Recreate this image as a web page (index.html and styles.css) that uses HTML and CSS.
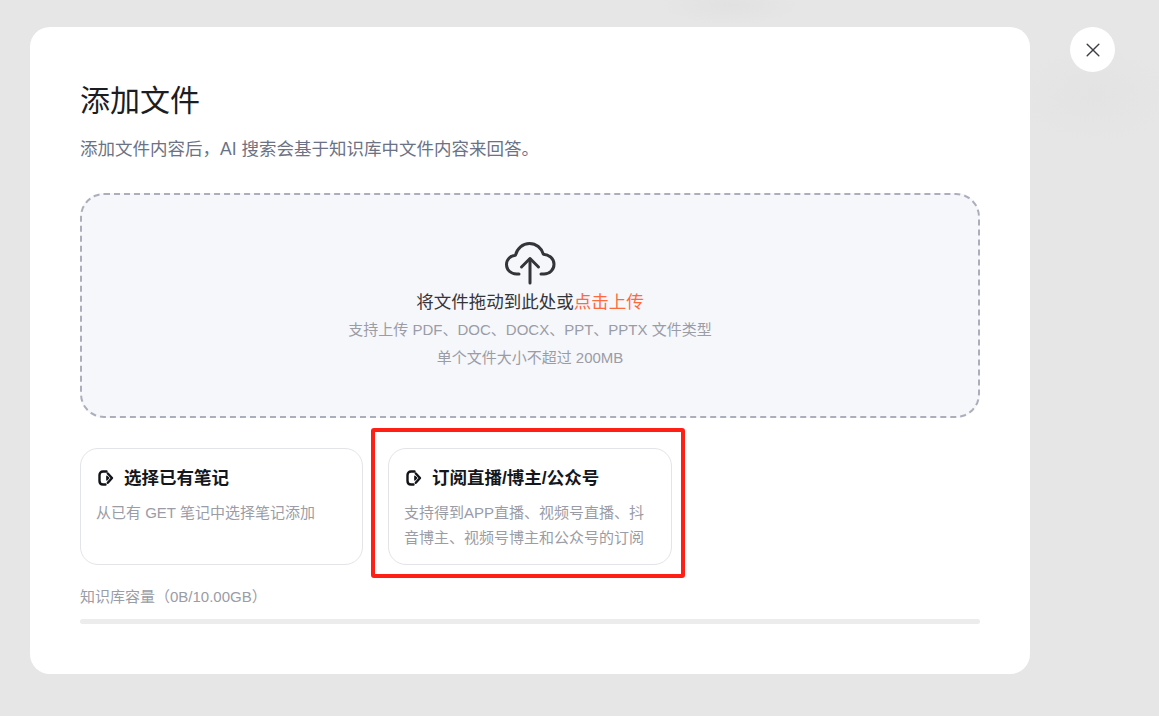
FILE: index.html
```html
<!DOCTYPE html>
<html lang="zh-CN">
<head>
  <meta charset="UTF-8" />
  <title>添加文件</title>
  <link rel="stylesheet" href="styles.css">
</head>
<body>

  <div class="overlay">
    <div class="modal">
      <h1 class="modal-title">添加文件</h1>
      <p class="modal-desc">添加文件内容后，AI 搜索会基于知识库中文件内容来回答。</p>

      <div class="upload-box">
        <svg class="upload-icon" width="52" height="44" viewBox="0 0 52 44" fill="none" stroke="#33353a" stroke-width="3" stroke-linecap="round" stroke-linejoin="round">
          <path d="M15 33H12.5C6.8 33 2.5 28.9 2.5 23.5C2.5 18.3 6.6 14.5 11.5 14.2C13 7.6 18.6 2.5 25.5 2.5C32.2 2.5 37.6 7 39.3 13.2C45 13.4 50 17.6 50 23.3C50 28.9 45.5 33 40 33H37" />
          <path d="M26 42V18" />
          <path d="M17.5 26L26 17.5L34.5 26" />
        </svg>
        <div class="upload-main">将文件拖动到此处或<span class="upload-link">点击上传</span></div>
        <div class="upload-hint upload-hint-first">支持上传 PDF、DOC、DOCX、PPT、PPTX 文件类型</div>
        <div class="upload-hint">单个文件大小不超过 200MB</div>
      </div>

      <div class="sources">
        <div class="source-card">
          <div class="source-title">
            <svg class="source-icon" width="16" height="16" viewBox="0 0 16 16" fill="none" stroke="#111318" stroke-width="2.4" stroke-linecap="round" stroke-linejoin="round">
              <path d="M8.5 1.5H5C2.8 1.5 1.5 3 1.5 5V11C1.5 13 2.8 14.5 5 14.5H7.5" />
              <path d="M9.8 3.5L14 8L9.8 12.8" />
              <path d="M8.8 6.2L10.8 8L8.8 10Z" fill="#111318" stroke-width="1.2" />
            </svg>
            选择已有笔记
          </div>
          <p class="source-desc">从已有 GET 笔记中选择笔记添加</p>
        </div>

        <div class="source-card">
          <div class="source-title">
            <svg class="source-icon" width="16" height="16" viewBox="0 0 16 16" fill="none" stroke="#111318" stroke-width="2.4" stroke-linecap="round" stroke-linejoin="round">
              <path d="M8.5 1.5H5C2.8 1.5 1.5 3 1.5 5V11C1.5 13 2.8 14.5 5 14.5H7.5" />
              <path d="M9.8 3.5L14 8L9.8 12.8" />
              <path d="M8.8 6.2L10.8 8L8.8 10Z" fill="#111318" stroke-width="1.2" />
            </svg>
            订阅直播/博主/公众号
          </div>
          <p class="source-desc">支持得到APP直播、视频号直播、抖音博主、视频号博主和公众号的订阅</p>
          <div class="highlight"></div>
        </div>
      </div>

      <div class="capacity-label">知识库容量（0B/10.00GB）</div>
      <div class="capacity-bar"></div>
    </div>

    <button class="close-btn" type="button" aria-label="关闭">
      <svg width="16" height="16" viewBox="0 0 16 16" fill="none" stroke="#3c3e44" stroke-width="1.4" stroke-linecap="round">
        <path d="M2.2 2.2L13.8 13.8" />
        <path d="M13.8 2.2L2.2 13.8" />
      </svg>
    </button>
  </div>

</body>
</html>
```

FILE: styles.css
```css
* {
  box-sizing: border-box;
}

html, body {
  height: 100%;
}

body {
  margin: 0;
  overflow: hidden;
  font-family: "Liberation Sans", "Noto Sans CJK SC", sans-serif;
  background-color: #e6e6e6;
  background-image:
    radial-gradient(ellipse 70px 20px at 730px 5px, #e1e1e1, transparent),
    radial-gradient(ellipse 80px 50px at 1095px 95px, #e3e3e3, transparent);
}

.overlay {
  display: flex;
  align-items: flex-start;
  gap: 40px;
  padding: 27px 0 0 30px;
}

.modal {
  flex: none;
  width: 1000px;
  height: 647px;
  padding: 51px 50px 0;
  background: #fff;
  border-radius: 20px;
}

.modal-title {
  margin: 0;
  font-size: 30px;
  line-height: 46px;
  font-weight: 400;
  color: #1b1d22;
}

.modal-desc {
  margin: 12px 0 0;
  font-size: 17.5px;
  line-height: 26px;
  color: #6b7285;
}

.upload-box {
  display: flex;
  flex-direction: column;
  align-items: center;
  height: 225px;
  margin-top: 31px;
  padding-top: 46px;
  background: #f6f7fb;
  border: 2px dashed #acaebc;
  border-radius: 24px;
}

.upload-icon {
  display: block;
}

.upload-main {
  margin-top: 4px;
  font-size: 17.5px;
  line-height: 26px;
  color: #33353a;
}

.upload-link {
  color: #ff6a3d;
}

.upload-hint {
  font-size: 15px;
  line-height: 28px;
  color: #9a9ca6;
}

.upload-hint-first {
  margin-top: 1px;
}

.sources {
  display: flex;
  gap: 25px;
  margin-top: 30px;
}

.source-card {
  position: relative;
  width: 284px;
  height: 117px;
  padding: 16px 15px 0;
  border: 1px solid #e3e4e8;
  border-radius: 18px;
}

.source-card:first-child {
  width: 283px;
}

.source-title {
  display: flex;
  align-items: center;
  gap: 10px;
  font-size: 17.5px;
  line-height: 26px;
  font-weight: 700;
  color: #15171c;
}

.source-icon {
  flex: none;
  margin-left: 2px;
}

.source-desc {
  margin: 9px 0 0;
  font-size: 15px;
  line-height: 25px;
  color: #9a9ca6;
}

.highlight {
  position: absolute;
  top: -21px;
  left: -18px;
  width: 314px;
  height: 150px;
  border: 4px solid #ff1f14;
  border-radius: 3px;
}

.capacity-label {
  margin-top: 22px;
  font-size: 15px;
  line-height: 20px;
  color: #9a9ca6;
}

.capacity-bar {
  height: 5px;
  margin-top: 12px;
  background: #ececec;
  border-radius: 3px;
}

.close-btn {
  flex: none;
  display: flex;
  align-items: center;
  justify-content: center;
  width: 45px;
  height: 45px;
  padding: 0;
  background: #fff;
  border: none;
  border-radius: 50%;
}
```
